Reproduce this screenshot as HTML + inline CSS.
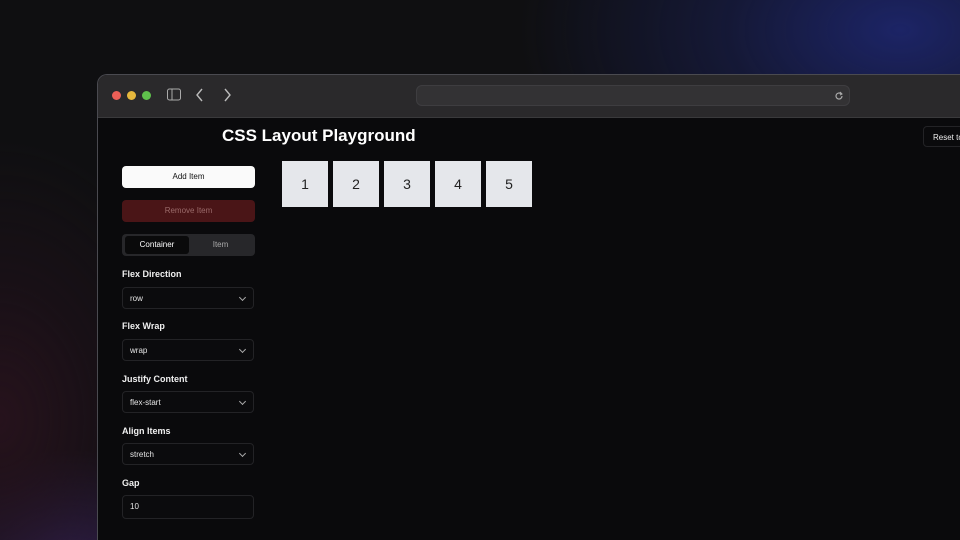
<!DOCTYPE html>
<html><head><style>
*{margin:0;padding:0;box-sizing:border-box}
html{width:960px;height:540px;overflow:hidden}
body{width:960px;height:540px;overflow:hidden;position:relative;font-family:"Liberation Sans",sans-serif;
background:radial-gradient(ellipse 380px 230px at 900px 30px,#1c2466 0%,rgba(28,36,100,0.45) 45%,rgba(0,0,0,0) 100%),
radial-gradient(ellipse 200px 280px at 0px 420px,#26121c 0%,rgba(38,18,30,0.4) 50%,rgba(0,0,0,0) 100%),
radial-gradient(ellipse 160px 110px at 70px 560px,#2e2050 0%,rgba(0,0,0,0) 100%),#0f0f11;}
.win{position:absolute;left:97px;top:74px;width:880px;height:480px;border-radius:10px 0 0 0;border:1px solid #4a4a50;border-right:none;overflow:hidden;background:#0a0a0c}
.in{position:absolute;left:-1px;top:-1px;width:880px;height:480px}
.bar{height:44px;background:#2a292b;border-bottom:1px solid #3a3a3c;position:relative}
.dot{position:absolute;top:17px;width:9px;height:9px;border-radius:50%}
.url{position:absolute;left:319px;top:11px;width:434px;height:21px;border-radius:6px;background:#333234;border:1px solid #3e3d40}
.t{position:absolute;color:#fff}
.sel{position:absolute;left:25px;width:132px;height:22px;border:1px solid #232326;border-radius:4px;color:#e5e5e5;font-size:8px;padding:6px 7px;background:#0b0b0d}
.sel.c:after{content:"";position:absolute;right:8px;top:7px;width:4px;height:4px;border-right:1px solid #aaa;border-bottom:1px solid #aaa;transform:rotate(45deg)}
.lab{position:absolute;left:25px;font-size:9px;font-weight:bold;color:#f0f0f0}
.box{position:absolute;top:87px;width:46px;height:46px;background:#e5e7eb;color:#222;font-size:14px;text-align:center;line-height:46px}
</style></head><body>
<div class="win"><div class="in">
 <div class="bar">
  <div class="dot" style="left:15px;background:#ec5f57"></div>
  <div class="dot" style="left:30px;background:#e5b73d"></div>
  <div class="dot" style="left:45px;background:#5fc04c"></div>
  <svg style="position:absolute;left:70px;top:14px" width="14" height="13" viewBox="0 0 14 13"><rect x="0.5" y="1" width="13" height="11" rx="2" fill="none" stroke="#aaa"/><line x1="5" y1="1" x2="5" y2="12" stroke="#aaa"/></svg>
  <svg style="position:absolute;left:98px;top:14px" width="10" height="14"><path d="M7 1L2 7l5 6" fill="none" stroke="#bbb" stroke-width="1.4"/></svg>
  <svg style="position:absolute;left:125px;top:14px" width="10" height="14"><path d="M3 1l5 6-5 6" fill="none" stroke="#bbb" stroke-width="1.4"/></svg>
  <div class="url"><svg style="position:absolute;right:5px;top:5px" width="10" height="10" viewBox="0 0 10 10"><path d="M8 5a3 3 0 1 1-1-2.2" fill="none" stroke="#aaa" stroke-width="1.2"/><path d="M6 1l2 2-2 1" fill="none" stroke="#aaa" stroke-width="1"/></svg></div>
 </div>
 <div class="t" style="left:125px;top:52px;font-size:17px;font-weight:bold">CSS Layout Playground</div>
 <div style="position:absolute;left:826px;top:52px;width:80px;height:21px;border:1px solid #232326;border-radius:4px;color:#eee;font-size:8px;padding:6px 9px">Reset to</div>
 <div style="position:absolute;left:25px;top:92px;width:133px;height:22px;background:#fafafa;border-radius:4px;color:#111;font-size:8px;text-align:center;line-height:22px">Add Item</div>
 <div style="position:absolute;left:25px;top:126px;width:133px;height:22px;background:#4a1517;border-radius:4px;color:#9a6a6a;font-size:8px;text-align:center;line-height:22px">Remove Item</div>
 <div style="position:absolute;left:25px;top:160px;width:133px;height:22px;background:#27272a;border-radius:4px">
  <div style="position:absolute;left:3px;top:2px;width:64px;height:18px;background:#0a0a0b;border-radius:3px;color:#fff;font-size:8px;text-align:center;line-height:18px">Container</div>
  <div style="position:absolute;left:67px;top:2px;width:63px;height:18px;color:#aaa;font-size:8px;text-align:center;line-height:18px">Item</div>
 </div>
 <div class="lab" style="top:195px">Flex Direction</div><div class="sel c" style="top:213px">row</div>
 <div class="lab" style="top:247px">Flex Wrap</div><div class="sel c" style="top:265px">wrap</div>
 <div class="lab" style="top:300px">Justify Content</div><div class="sel c" style="top:317px">flex-start</div>
 <div class="lab" style="top:352px">Align Items</div><div class="sel c" style="top:369px">stretch</div>
 <div class="lab" style="top:404px">Gap</div><div class="sel" style="top:421px;height:24px">10</div>
 <div class="box" style="left:185px">1</div><div class="box" style="left:236px">2</div><div class="box" style="left:287px">3</div><div class="box" style="left:338px">4</div><div class="box" style="left:389px">5</div>
</div></div>
</body></html>
